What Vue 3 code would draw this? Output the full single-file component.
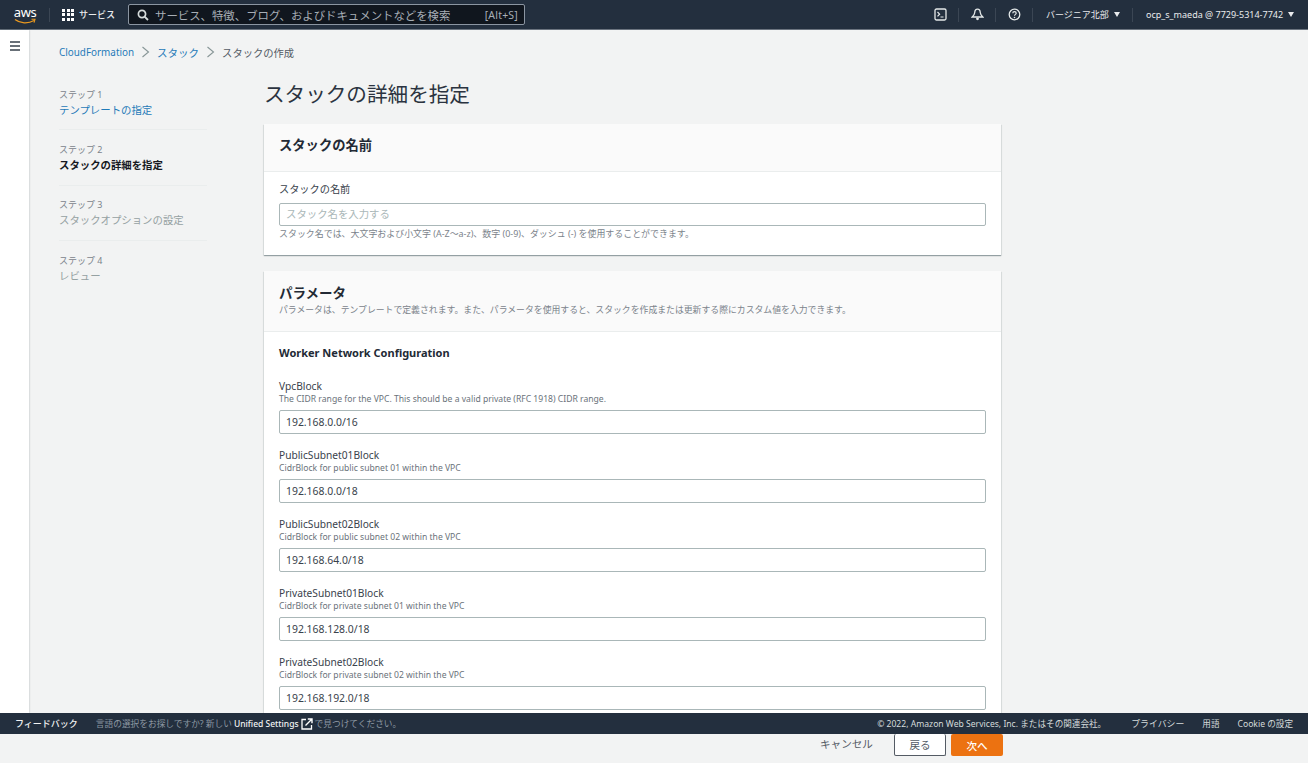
<script setup>
const steps = [
  { no: 'ステップ 1', name: 'テンプレートの指定', state: 'link' },
  { no: 'ステップ 2', name: 'スタックの詳細を指定', state: 'active' },
  { no: 'ステップ 3', name: 'スタックオプションの設定', state: 'off' },
  { no: 'ステップ 4', name: 'レビュー', state: 'off' }
]

const params = [
  { name: 'VpcBlock', desc: 'The CIDR range for the VPC. This should be a valid private (RFC 1918) CIDR range.', value: '192.168.0.0/16' },
  { name: 'PublicSubnet01Block', desc: 'CidrBlock for public subnet 01 within the VPC', value: '192.168.0.0/18' },
  { name: 'PublicSubnet02Block', desc: 'CidrBlock for public subnet 02 within the VPC', value: '192.168.64.0/18' },
  { name: 'PrivateSubnet01Block', desc: 'CidrBlock for private subnet 01 within the VPC', value: '192.168.128.0/18' },
  { name: 'PrivateSubnet02Block', desc: 'CidrBlock for private subnet 02 within the VPC', value: '192.168.192.0/18' }
]
</script>

<template>
  <div class="page">
    <header class="topbar">
      <div class="logo">
        <span class="logo-text">aws</span>
        <svg class="smile" width="22" height="7" viewBox="0 0 22 7">
          <path d="M1 1.5C6 5.5 14 6 20 2.5" fill="none" stroke="#ec9a1f" stroke-width="1.3" />
          <path d="M17.5 1.2L21 1.2L20 4.6" fill="none" stroke="#ec9a1f" stroke-width="1.1" />
        </svg>
      </div>
      <div class="services">
        <span class="grid-icon"><i v-for="n in 9" :key="n"></i></span>
        <span>サービス</span>
      </div>
      <div class="search">
        <svg width="12" height="12" viewBox="0 0 12 12">
          <circle cx="5" cy="5" r="3.6" fill="none" stroke="#d5dbdb" stroke-width="1.7" />
          <path d="M7.6 7.6L11 11" stroke="#d5dbdb" stroke-width="1.8" />
        </svg>
        <span class="search-text">サービス、特徴、ブログ、およびドキュメントなどを検索</span>
        <span class="search-key">[Alt+S]</span>
      </div>
      <div class="top-right">
        <span class="top-icon">
          <svg width="13" height="13" viewBox="0 0 13 13">
            <rect x="1" y="1" width="11" height="11" rx="1.5" fill="none" stroke="#e5e9e9" stroke-width="1.3" />
            <path d="M3.5 4L5.6 6.2L3.5 8.4M6.5 9H9.5" fill="none" stroke="#e5e9e9" stroke-width="1.2" />
          </svg>
        </span>
        <span class="top-icon">
          <svg width="13" height="13" viewBox="0 0 13 13">
            <path d="M6.5 1.2C4.6 1.2 3.8 3 3.7 4.8C3.6 6.6 2.6 7.6 1.2 9H11.8C10.4 7.6 9.4 6.6 9.3 4.8C9.2 3 8.4 1.2 6.5 1.2Z" fill="none" stroke="#e5e9e9" stroke-width="1.3" />
            <circle cx="6.5" cy="10.8" r="1.4" fill="#e5e9e9" />
          </svg>
        </span>
        <span class="top-icon">
          <svg width="13" height="13" viewBox="0 0 13 13">
            <circle cx="6.5" cy="6.5" r="5.3" fill="none" stroke="#e5e9e9" stroke-width="1.3" />
            <path d="M4.8 5.2C4.8 3.2 8.2 3.2 8.2 5.2C8.2 6.4 6.5 6.4 6.5 7.8" fill="none" stroke="#e5e9e9" stroke-width="1.2" />
            <circle cx="6.5" cy="9.5" r=".8" fill="#e5e9e9" />
          </svg>
        </span>
        <span class="top-menu region">バージニア北部<i class="caret"></i></span>
        <span class="top-menu account">ocp_s_maeda @ 7729-5314-7742<i class="caret"></i></span>
      </div>
    </header>

    <div class="body">
      <aside class="side-strip">
        <span class="burger"><i></i><i></i><i></i></span>
      </aside>

      <main class="main">
        <nav class="crumbs">
          <a>CloudFormation</a>
          <svg class="chev" width="9" height="12" viewBox="0 0 9 12"><path d="M1.5 1L7.5 6L1.5 11" fill="none" stroke="#879596" stroke-width="1.1" /></svg>
          <a class="crumb-ja">スタック</a>
          <svg class="chev" width="9" height="12" viewBox="0 0 9 12"><path d="M1.5 1L7.5 6L1.5 11" fill="none" stroke="#879596" stroke-width="1.1" /></svg>
          <span class="crumb-now">スタックの作成</span>
        </nav>

        <div class="columns">
          <ol class="steps">
            <li v-for="s in steps" :key="s.no" class="step">
              <small>{{ s.no }}</small>
              <span :class="s.state">{{ s.name }}</span>
            </li>
          </ol>

          <div class="content">
            <h1>スタックの詳細を指定</h1>

            <section class="card">
              <div class="card-head">
                <h2>スタックの名前</h2>
              </div>
              <div class="card-body name-body">
                <label>スタックの名前</label>
                <div class="input placeholder">スタック名を入力する</div>
                <p class="hint">スタック名では、大文字および小文字 (A-Z～a-z)、数字 (0-9)、ダッシュ (-) を使用することができます。</p>
              </div>
            </section>

            <section class="card">
              <div class="card-head param-head">
                <h2>パラメータ</h2>
                <p class="hint">パラメータは、テンプレートで定義されます。また、パラメータを使用すると、スタックを作成または更新する際にカスタム値を入力できます。</p>
              </div>
              <div class="card-body param-body">
                <h3>Worker Network Configuration</h3>
                <div v-for="p in params" :key="p.name" class="param">
                  <label>{{ p.name }}</label>
                  <p class="desc">{{ p.desc }}</p>
                  <div class="input">{{ p.value }}</div>
                </div>
              </div>
            </section>
          </div>
        </div>
      </main>
    </div>

    <footer class="footer">
      <span class="feedback">フィードバック</span>
      <span class="notice">言語の選択をお探しですか? 新しい <b>Unified Settings</b>
        <svg width="12" height="12" viewBox="0 0 12 12">
          <path d="M5 1.5H1V11H10.5V7" fill="none" stroke="#fff" stroke-width="1.3" />
          <path d="M4.5 7.5L10.5 1.5M6.8 1H11V5.2" fill="none" stroke="#fff" stroke-width="1.4" />
        </svg>
        で見つけてください。</span>
      <span class="copy">© 2022, Amazon Web Services, Inc. またはその関連会社。</span>
      <span class="foot-link privacy">プライバシー</span>
      <span class="foot-link terms">用語</span>
      <span class="foot-link cookie">Cookie の設定</span>
    </footer>

    <div class="actions">
      <span class="cancel">キャンセル</span>
      <span class="btn back">戻る</span>
      <span class="btn next">次へ</span>
    </div>
  </div>
</template>

<style scoped>
.page {
  display: flex;
  flex-direction: column;
  width: 1308px;
  height: 763px;
  overflow: hidden;
  background: #f2f3f3;
  font-family: "Noto Sans", "Noto Sans CJK JP", sans-serif;
  color: #16191f;
}

.topbar {
  display: flex;
  align-items: center;
  flex-shrink: 0;
  height: 30px;
  padding-left: 14px;
  box-sizing: border-box;
  background: #232f3e;
  border-bottom: 1px solid #6b747f;
  color: #e9ebed;
  font-size: 9px;
}

.logo {
  display: flex;
  flex-direction: column;
  align-items: center;
  width: 22px;
  height: 22px;
}

.logo-text {
  font-size: 13px;
  line-height: 13px;
  margin-top: 2px;
  color: #fff;
  letter-spacing: -0.4px;
}

.smile {
  margin-top: -1px;
}

.services {
  display: flex;
  align-items: center;
  gap: 5px;
  width: 66px;
  box-sizing: border-box;
  height: 14px;
  margin-left: 13px;
  padding-left: 12px;
  border-left: 1px solid #3b4654;
  font-weight: 500;
}

.grid-icon {
  display: grid;
  grid-template-columns: repeat(3, 3px);
  grid-auto-rows: 3px;
  gap: 1.5px;
}

.grid-icon i {
  background: #fff;
}

.search {
  display: flex;
  align-items: center;
  width: 397px;
  height: 21px;
  box-sizing: border-box;
  margin-left: 13px;
  padding: 0 6px 0 8px;
  background: #10161e;
  border: 1px solid #8b95a1;
  border-radius: 2px;
}

.search-text {
  margin-left: 6px;
  flex: 1;
  color: #a7aeb6;
  font-size: 11.4px;
}

.search-key {
  color: #a7aeb6;
  font-size: 10.5px;
  letter-spacing: 0.2px;
}

.top-right {
  display: flex;
  align-items: center;
  margin-left: auto;
  height: 14px;
}

.top-icon {
  display: flex;
  align-items: center;
  justify-content: center;
  width: 37px;
  height: 14px;
  box-sizing: border-box;
  padding-left: 1px;
  border-right: 1px solid #3b4654;
}

.top-menu {
  display: flex;
  align-items: center;
  gap: 5px;
  white-space: nowrap;
  font-size: 9px;
}

.region {
  width: 100px;
  height: 14px;
  box-sizing: border-box;
  padding-left: 13px;
  border-right: 1px solid #3b4654;
}

.account {
  width: 175px;
  padding-left: 13px;
  box-sizing: border-box;
}

.caret {
  border-left: 3.5px solid transparent;
  border-right: 3.5px solid transparent;
  border-top: 5px solid #e9ebed;
}

.body {
  display: flex;
  flex: 1;
  min-height: 0;
}

.side-strip {
  flex-shrink: 0;
  width: 29px;
  background: #fff;
  box-shadow: 0 0 2px rgba(0, 28, 36, 0.3);
}

.burger {
  display: flex;
  flex-direction: column;
  gap: 2.5px;
  width: 10px;
  margin: 11px 0 0 10px;
}

.burger i {
  height: 1.5px;
  background: #687078;
}

.main {
  flex: 1;
  min-width: 0;
  overflow: hidden;
  padding: 15px 0 0 30px;
}

.crumbs {
  display: flex;
  align-items: center;
  height: 14px;
  font-size: 9.9px;
  color: #1f7ab8;
}

.crumb-ja {
  font-size: 10.5px;
}

.chev {
  margin: 0 7px;
}

.crumb-now {
  font-size: 10.3px;
  color: #545b64;
}

.columns {
  display: flex;
  margin-top: 15px;
}

.steps {
  flex-shrink: 0;
  width: 148px;
  margin: 0 57px 0 0;
  padding: 0;
  list-style: none;
}

.step {
  display: flex;
  flex-direction: column;
  height: 55.4px;
  box-sizing: border-box;
  padding-top: 12.5px;
  border-top: 1px solid #eaeded;
  font-size: 10.4px;
  line-height: 16px;
}

.step:first-child {
  border-top-color: transparent;
}

.step small {
  font-size: 9px;
  line-height: 14px;
  color: #7b838b;
}

.step .link {
  color: #1f7ab8;
}

.step .active {
  font-weight: 700;
}

.step .off {
  color: #95a1a2;
}

.content {
  width: 737px;
  padding-top: 7px;
}

h1 {
  margin: 0 0 16px;
  font-size: 20.6px;
  line-height: 27px;
  font-weight: 400;
  color: #2b3340;
}

.card {
  margin-bottom: 16px;
  background: #fff;
  box-shadow: 0 1px 1px rgba(0, 28, 36, 0.3), 1px 1px 1px rgba(0, 28, 36, 0.06), -1px 1px 1px rgba(0, 28, 36, 0.06);
}

.card-head {
  height: 48px;
  box-sizing: border-box;
  padding: 12px 15px;
  background: #fafafa;
  border-bottom: 1px solid #eaeded;
}

h2 {
  margin: 0;
  font-size: 13.3px;
  line-height: 18px;
  font-weight: 700;
  color: #232a35;
}

.param-head {
  height: 61px;
  padding-top: 13px;
}

.param-head h2 {
  font-size: 13.5px;
}

.card-body {
  padding: 10px 15px 0;
}

.name-body {
  height: 83px;
  box-sizing: border-box;
}

label {
  display: block;
  font-size: 10.2px;
  line-height: 15px;
  color: #39424c;
}

.input {
  height: 24px;
  box-sizing: border-box;
  padding: 0 6px;
  background: #fff;
  border: 1px solid #aab7b8;
  border-radius: 2px;
  font-size: 10.4px;
  line-height: 22px;
  color: #39424c;
}

.placeholder {
  height: 23px;
  margin-top: 6px;
  line-height: 21px;
  color: #aab7b8;
}

.hint {
  margin: 1px 0 0;
  font-size: 8.95px;
  line-height: 13px;
  color: #7b838b;
}

.param-head .hint {
  margin-top: 2px;
  font-size: 8.86px;
}

.param-body {
  padding: 12px 15px 40px;
}

h3 {
  margin: 0 0 18px;
  font-size: 11px;
  line-height: 17px;
  font-weight: 700;
  color: #232a35;
}

.param {
  margin-bottom: 14px;
}

.desc {
  margin: -1px 0 0;
  font-size: 8.6px;
  line-height: 12px;
  color: #6a727a;
}

.param .input {
  margin-top: 5px;
}

.footer {
  display: flex;
  align-items: center;
  flex-shrink: 0;
  height: 21px;
  padding: 0 15px;
  background: #232f3e;
  font-size: 8.6px;
  color: #d5dbdb;
  position: relative;
  white-space: nowrap;
}

.feedback {
  font-weight: 500;
  font-size: 9px;
  color: #f2f3f3;
}

.notice {
  display: flex;
  align-items: center;
  gap: 2px;
  margin-left: 18px;
  font-size: 8.7px;
  color: #8d98a3;
}

.notice b {
  color: #f2f3f3;
  font-weight: 500;
  font-size: 8.5px;
}

.copy {
  margin-left: auto;
}

.foot-link {
  margin-left: 18px;
}

.privacy {
  margin-left: 25px;
  font-size: 8.9px;
}

.actions {
  display: flex;
  align-items: flex-start;
  flex-shrink: 0;
  height: 29px;
  padding-left: 820px;
  font-size: 10.6px;
}

.cancel {
  width: 74px;
  line-height: 20px;
  color: #545b64;
}

.btn {
  display: flex;
  align-items: center;
  justify-content: center;
  width: 52px;
  height: 22px;
  box-sizing: border-box;
  border-radius: 2px;
}

.back {
  background: #fff;
  border: 1px solid #545b64;
  border-top: none;
  color: #545b64;
}

.next {
  margin-left: 5px;
  background: #ec7211;
  color: #fff;
  font-weight: 500;
}
</style>

<style>
html,
body {
  background: #fff;
}
</style>
